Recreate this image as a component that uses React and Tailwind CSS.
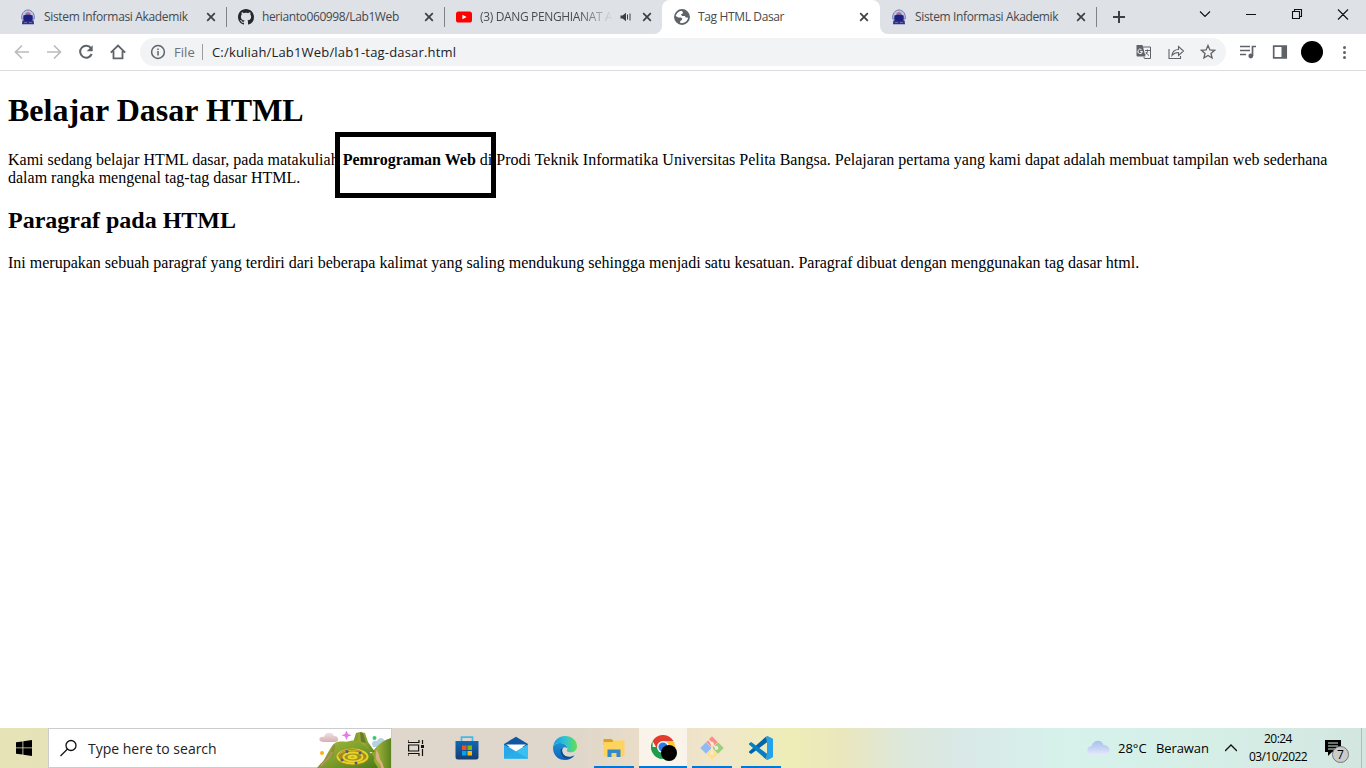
import React from "react";

function Crest() {
  return (
    <svg className="h-4 w-4 shrink-0" viewBox="0 0 16 16">
      <path d="M1.800 10C1 5 4 1 8 1s7 4 6.200 9z" fill="#c5c7e0" stroke="#7376b0" strokeWidth="1" />
      <path d="M4.500 6.500 6 3.200h4l1.500 3.300z" fill="#8b8fc4" />
      <path d="M3.300 6.500 8 5.200l4.700 1.300V10l-.7 2H4l-.7-2z" fill="#1d2080" />
      <circle cx="8" cy="4.600" r="1.200" fill="#ee5540" />
      <path d="M2.400 11.500c2-.4 4-.2 5.600.4 1.600-.6 3.600-.8 5.600-.4l.4 3.700H2z" fill="#2b2f88" />
      <path d="M3.800 13.600h3.200M9 13.600h3.200" stroke="#7d81b8" strokeWidth=".8" />
    </svg>
  );
}

function GithubMark() {
  return (
    <svg className="h-4 w-4 shrink-0" viewBox="0 0 16 16" fill="#24292f">
      <path d="M8 0C3.580 0 0 3.580 0 8c0 3.540 2.290 6.530 5.470 7.590.4.070.55-.17.55-.38 0-.19-.01-.82-.01-1.490-2.010.37-2.530-.49-2.690-.94-.09-.23-.48-.94-.82-1.130-.28-.15-.68-.52-.01-.53.63-.01 1.080.58 1.230.82.72 1.210 1.870.87 2.330.66.07-.52.28-.87.51-1.070-1.780-.2-3.640-.89-3.640-3.950 0-.87.31-1.590.82-2.150-.08-.2-.36-1.020.08-2.120 0 0 .67-.21 2.200.82.64-.18 1.320-.27 2-.27s1.360.09 2 .27c1.530-1.040 2.200-.82 2.200-.82.44 1.100.16 1.920.08 2.120.51.56.82 1.270.82 2.150 0 3.070-1.870 3.750-3.650 3.950.29.25.54.73.54 1.480 0 1.070-.01 1.930-.01 2.200 0 .21.15.46.55.38A8.010 8.010 0 0 0 16 8c0-4.420-3.580-8-8-8z" />
    </svg>
  );
}

function Youtube() {
  return (
    <svg className="h-4 w-4 shrink-0" viewBox="0 0 16 16">
      <rect y="2.500" width="16" height="11" rx="2.600" fill="#f00" />
      <path d="m6.400 5.700 4.200 2.300-4.200 2.300z" fill="#fff" />
    </svg>
  );
}

function Globe() {
  return (
    <svg className="h-4 w-4 shrink-0" viewBox="0 0 16 16">
      <circle cx="8" cy="8" r="7.200" fill="#5f6368" />
      <path d="M7.500 1.700c-2.900.2-5.300 2.400-5.800 5.300l2.600 1.400h2.500l1.500 1.200-.6 1.700-1.500.6v2.200c3.600.8 7.300-1.500 8-5.300l-2.400-.2-1-1.700H8.200L6.800 5.400l1.900-1 .2-1.500z" fill="#fff" />
      <circle cx="8" cy="8" r="7.200" fill="none" stroke="#5f6368" strokeWidth="1.500" />
    </svg>
  );
}

function TabClose() {
  return (
    <svg className="h-4 w-4 shrink-0" viewBox="0 0 16 16" stroke="#3c4043" strokeWidth="1.700">
      <path d="m4.200 4.200 7.600 7.600M11.800 4.200l-7.600 7.600" />
    </svg>
  );
}

function Tab({ icon, children, textClass, divider }) {
  return (
    <div className="flex h-full shrink-0 items-center pl-[11px]">
      {icon}
      <span className={"ml-2 whitespace-nowrap text-[12px] leading-4 text-[#45494d] " + textClass}>{children}</span>
      <TabClose />
      <span className={"ml-[7px] h-5 w-px shrink-0 " + (divider ? "bg-[#808387]" : "")} />
    </div>
  );
}

function TabStrip() {
  return (
    <header className="flex h-[34px] bg-[#dee1e6] font-['Open_Sans',sans-serif]">
      <div className="flex w-[662px] pl-[9px]">
        <Tab icon={<Crest />} textClass="w-[159px] tracking-[-0.34px]" divider>Sistem Informasi Akademik</Tab>
        <Tab icon={<GithubMark />} textClass="w-[159px] tracking-[-0.39px]" divider>herianto060998/Lab1Web</Tab>
        <div className="flex h-full items-center pl-[11px]">
          <Youtube />
          <span className="ml-2 w-[133px] whitespace-nowrap bg-linear-to-r from-[#45494d] from-75% to-[#45494d00] bg-clip-text text-[12px] leading-4 tracking-[-0.35px] text-transparent">(3) DANG PENGHIANAT A</span>
          <svg className="ml-[5px] h-4 w-4" viewBox="0 0 16 16" fill="#3c4043">
            <path d="M2.500 6.500h2L8 3.800v8.400L4.500 9.500h-2z" />
            <path d="M9.500 5.500v5M12 4.500v7" stroke="#3c4043" fill="none" />
          </svg>
          <span className="ml-[5px] flex"><TabClose /></span>
        </div>
      </div>
      <div className="w-[218px]">
        <div className="relative h-full rounded-t-lg bg-white pl-px">
          <Tab icon={<Globe />} textClass="w-[158px] tracking-[-0.36px]">Tag HTML Dasar</Tab>
          <svg className="absolute bottom-0 -left-2 h-2 w-2" viewBox="0 0 8 8" fill="#fff"><path d="M8 0v8H0a8 8 0 0 0 8-8" /></svg>
          <svg className="absolute -right-2 bottom-0 h-2 w-2" viewBox="0 0 8 8" fill="#fff"><path d="M0 0v8h8a8 8 0 0 1-8-8" /></svg>
        </div>
      </div>
      <Tab icon={<Crest />} textClass="w-[158px] tracking-[-0.36px]" divider>Sistem Informasi Akademik</Tab>
      <svg className="mt-[9px] ml-[13px] h-4 w-4" viewBox="0 0 16 16" stroke="#3c4043" strokeWidth="2"><path d="M9 2v12M3 8h12" /></svg>
      <svg className="ml-auto h-[34px] w-[170px]" viewBox="0 0 170 34" fill="none" stroke="#111" strokeWidth="1.100">
        <path d="m4 11.500 5 5 5-5M50 14.500h10M96.500 11.500h7v7h-7zM98.500 11V9.500h7v7H104M142 9.500l10 10M152 9.500l-10 10" />
      </svg>
    </header>
  );
}

function Toolbar() {
  return (
    <div className="flex h-[37px] items-center border-b border-[#dadce0] bg-white font-['Open_Sans',sans-serif] text-[13px]">
      <svg className="h-9 w-[140px] shrink-0" viewBox="0 0 140 36" fill="none" strokeWidth="1.700">
        <path d="M29 18H16.500M22 11.500 15.500 18l6.500 6.500M47 18h12.500M54 11.500l6.500 6.500-6.500 6.500" stroke="#babcbe" />
        <path d="M91 14.200A6 6 0 1 0 91.700 20" stroke="#5f6368" strokeWidth="2" />
        <path d="M92.700 11.200v6h-6z" fill="#5f6368" />
        <path d="M110.800 18.700 118 11.500l7.200 7.200M113.500 17v7.300h9V17" stroke="#5f6368" strokeWidth="1.800" />
      </svg>
      <div className="flex h-7 w-[1086px] shrink-0 items-center rounded-full bg-[#f1f3f4] pl-[10px]">
        <svg className="h-4 w-4" viewBox="0 0 16 16" fill="none" stroke="#5f6368" strokeWidth="1.500"><circle cx="8" cy="8" r="6.400" /><path d="M8 7v4.500M8 4.400V6" /></svg>
        <span className="ml-2 w-[21px] whitespace-nowrap pt-px tracking-[0.05px] text-[#6d7176]">File</span>
        <span className="ml-[7px] h-4 w-px bg-[#9b9ea2]" />
        <span className="ml-[9px] whitespace-nowrap pt-px tracking-[0.18px] text-[#202124]">C:/kuliah/Lab1Web/lab1-tag-dasar.html</span>
        <svg className="mr-[10px] ml-auto h-5 w-20" viewBox="0 0 80 20" fill="none" stroke="#5f6368" strokeWidth="1.300">
          <path d="M.5 3h6l3 11.500h-8a1 1 0 0 1-1-1z" fill="#5f6368" stroke="none" />
          <path d="M7 5h7.500v11.500H8.500L7.800 15M9 8.500h5M11.500 7.500v1c0 2-1 3-2 4M10 10c.5 1.500 2 3 3 3.500" strokeWidth="1" />
          <path d="M5.500 7.700A2.200 2.200 0 1 0 6.300 9.500H4.300" stroke="#fff" strokeWidth="1" />
          <path d="M33 7v9.500h11.500V14M36 13.500c.5-4 3-6 6.500-6V4.500L47.500 9l-5 4.500v-3c-2.500 0-4.500.5-6.500 3z" strokeWidth="1.100" />
          <path d="m72 3.500 1.900 4.400 4.700.4L75 11.400l1.100 4.600-4.100-2.500-4.100 2.500 1.100-4.600-3.600-3.100 4.700-.4z" />
        </svg>
      </div>
      <svg className="h-9 w-[140px] shrink-0" viewBox="0 0 140 36" fill="none" stroke="#5f6368" strokeWidth="1.700">
        <path d="M14 12.500h10M14 16.500h10M14 20.500h6M26.500 22v-9.500h3.500" />
        <circle cx="24.800" cy="22" r="2.400" fill="#5f6368" stroke="none" />
        <path d="M47.700 12.200h12.500v11.600H47.700z" /><path d="M55.500 12H61v12h-5.500z" fill="#5f6368" stroke="none" />
        <circle cx="86" cy="18" r="11" fill="#000" stroke="none" />
        <g fill="#5f6368" stroke="none"><circle cx="118.500" cy="13.500" r="1.500" /><circle cx="118.500" cy="18.500" r="1.500" /><circle cx="118.500" cy="23.500" r="1.500" /></g>
      </svg>
    </div>
  );
}

function Page() {
  return (
    <main className="h-[657px] bg-white px-2 pt-[21px] font-['Liberation_Serif',serif] text-[16px] leading-[18px] text-black">
      <h1 className="text-[32px] leading-[37px] font-bold">Belajar Dasar HTML</h1>
      <p className="mt-[22px]">
        Kami sedang belajar HTML dasar, pada matakuliah{" "}
        <span className="relative">
          <b>Pemrograman Web</b>
          <span className="absolute -top-[19px] -left-2 h-[66px] w-[161px] border-5 border-black" />
        </span>{" "}
        di Prodi Teknik Informatika Universitas Pelita Bangsa. Pelajaran pertama yang kami dapat adalah membuat tampilan web sederhana dalam rangka mengenal tag-tag dasar HTML.
      </p>
      <h2 className="mt-5 text-[24px] leading-[27px] font-bold">Paragraf pada HTML</h2>
      <p className="mt-5">Ini merupakan sebuah paragraf yang terdiri dari beberapa kalimat yang saling mendukung sehingga menjadi satu kesatuan. Paragraf dibuat dengan menggunakan tag dasar html.</p>
    </main>
  );
}

function SearchArt() {
  return (
    <svg className="h-[39px] w-[74px]" viewBox="0 0 74 39">
      <defs>
        <linearGradient id="hill" x2="1" y2="1"><stop stopColor="#a9b83a" /><stop offset=".5" stopColor="#7b9e2b" /><stop offset="1" stopColor="#4c7a18" /></linearGradient>
        <linearGradient id="hill2" x2="1"><stop stopColor="#5d8420" /><stop offset=".55" stopColor="#9cb038" /><stop offset="1" stopColor="#5b831f" /></linearGradient>
        <linearGradient id="pink" x2="0" y2="1"><stop stopColor="#f3dfe0" /><stop offset="1" stopColor="#d5b0b6" /></linearGradient>
      </defs>
      <path d="M3 12c-2-3 1-5 4-4 1-5 8-6 10-1 4-1 6 5 2 6H6z" fill="url(#pink)" />
      <path d="M55 15c0-3 3-4 5-3 2-5 7-3 8 0 4 1 3 6-1 6H56z" fill="#b7d2df" />
      <path d="M29.500 1.500 31 5l3.500 1.200L31 7.500 29.500 11 28 7.500l-3.500-1.300L28 5z" fill="#e27ae8" />
      <circle cx="5" cy="24" r="2" fill="#ffad18" /><circle cx="57.500" cy="9" r="2" fill="#3ac874" />
      <path d="M51 27c6-4 9-14 23-18v30H44z" fill="url(#hill2)" />
      <path d="m36 14 3-10 4-1 5 1 3 9 7 10H30z" fill="url(#hill2)" />
      <path d="m43 3 1 10 5 1-3-10z" fill="#6b7b2c" />
      <path d="M2 39C8 31 13 17 18 14c6-3 10 0 15-2 8-2 13 3 18 9 4 5 7 6 6 9-1 3 3 6 4 9z" fill="url(#hill)" />
      <path d="M0 39c5-7 10-9 13-15l4-9c3 3-2 8 0 11-4 3-9 5-11 13z" fill="#8e9039" />
      <path d="M4 37c3-5 9-7 11-14" fill="none" stroke="#c39268" strokeWidth="1.500" />
      <path d="M59 21c5 5 2 8 6 12l2 6h-3c0-5-6-7-5-12z" fill="#dcae80" />
      <ellipse cx="35.500" cy="28.500" rx="16" ry="8" fill="#a08d1c" />
      <g fill="none" stroke="#e8d42b" strokeWidth="2"><ellipse cx="35.500" cy="27.500" rx="15" ry="7" /><ellipse cx="36" cy="28" rx="9.500" ry="4.500" /><ellipse cx="35.500" cy="28" rx="4" ry="1.500" /></g>
      <path d="M21 27c2-6 15-9 24-4" fill="none" stroke="#bd7741" />
      <g fill="#4e5d75"><circle cx="30" cy="22.500" r="1.500" /><circle cx="43" cy="24" r="1.500" /><circle cx="25" cy="31" r="1.500" /><circle cx="39" cy="34" r="1.500" /></g>
    </svg>
  );
}

function Store() {
  return <svg className="h-6 w-6" viewBox="0 0 24 24"><defs><linearGradient id="store" x2="0" y2="1"><stop stopColor="#1267b5" /><stop offset="1" stopColor="#173d73" /></linearGradient></defs><path d="M6.500 6V1.200h11V6" fill="none" stroke="#43b9e6" strokeWidth="1.700" /><path d="M.5 5h23v16a2.500 2.500 0 0 1-2.500 2.500H3A2.500 2.500 0 0 1 .5 21z" fill="url(#store)" /><path fill="#f25022" d="M7 9.500h4.500V14H7z" /><path fill="#7fba00" d="M12.500 9.500H17V14h-4.500z" /><path fill="#00a4ef" d="M7 15h4.500v4.500H7z" /><path fill="#ffb900" d="M12.500 15H17v4.500h-4.500z" /></svg>;
}

function Mail() {
  return <svg className="h-6 w-6" viewBox="0 0 24 24"><path d="M0 8 12 .8 24 8v3H0z" fill="#1257a2" /><path d="M2 8.500h20l-10 7z" fill="#fff" /><path d="M0 8.500V22.500h24V8.500L12 15.500z" fill="#28a8e8" /><path d="m0 22.500 24-14v14z" fill="#36c1f2" /><path d="m12 15.500 12 7H0z" fill="#2aaee9" /></svg>;
}

function Edge() {
  return (
    <svg className="h-6 w-6" viewBox="0 0 24 24">
      <defs><linearGradient id="edgeA" x2="1"><stop stopColor="#169ae1" /><stop offset=".5" stopColor="#2ac4d4" /><stop offset="1" stopColor="#67df4c" /></linearGradient><linearGradient id="edgeB" x2="0" y2="1"><stop stopColor="#1b93d8" /><stop offset="1" stopColor="#1160b7" /></linearGradient></defs>
      <path d="M.2 10C1.500 3.800 6.200 0 12 0c7 0 12 4.700 12 10.300 0 4-3 6-6.500 6-3.300 0-4.200-1.300-3.300-2.500C16 11 12 7 7 7 3.800 7 1.400 8.300.2 10z" fill="url(#edgeA)" />
      <path d="M.2 10C2 7.600 5 6.700 7.500 7c4 .4 7 3 7 5.500-1-1-2-1.500-3.200-1.300-2 .4-2.800 3-1.800 5.500 2 5 8 5.300 12 2.500-2 3-5.400 4.800-9.500 4.800C4.500 24-1 18 .2 10z" fill="url(#edgeB)" />
      <path d="M8 13c-1.500 4 1.500 9 6 9.800 3-.2 5.700-1.400 7.500-3.600-5 2.800-10.500 1.500-12-2.500-.5-1.500-.5-3 0-4.200z" fill="#0d4b8d" />
    </svg>
  );
}

function Explorer() {
  return <svg className="h-6 w-6" viewBox="0 0 24 24"><path d="M1.500 3h8l2 2v4h-10z" fill="#dda119" /><path d="M1.500 6h9l2-1.500h10V20.500h-21z" fill="#ffd45d" /><path d="M5.500 21v-7.500h13V21h-4v-4h-5v4z" fill="#3188cd" /></svg>;
}

function Chrome() {
  return <svg className="mt-0.5 ml-1 h-7 w-7" viewBox="0 0 28 28"><path d="M12 12H1.600V6A12 12 0 0 0 12 24l5-9z" fill="#229b4b" /><path d="M12 6h10.400A12 12 0 0 1 12 24l5-9z" fill="#fcc934" /><path d="M1.600 6A12 12 0 0 1 22.400 6H12l-5.200 9z" fill="#e33b2e" /><circle cx="12" cy="12" r="6" fill="#fff" /><circle cx="12" cy="12" r="4.600" fill="#297be8" /><circle cx="18" cy="18" r="8" fill="#000" /></svg>;
}

function Git() {
  return (
    <svg className="h-6 w-6" viewBox="0 0 24 24">
      <path d="m12 .3 5.700 5.700-5.700 5.700L6.300 6z" fill="#ff8c8c" />
      <path d="m6 6.300 5.700 5.700L6 17.700.3 12z" fill="#8fbaf3" />
      <path d="m18 6.300 5.700 5.700-5.700 5.700-5.700-5.700z" fill="#99cf7d" />
      <path d="m12 12.300 5.700 5.700-5.700 5.700L6.300 18z" fill="#ffe08a" />
      <path d="m8 3.500 8.500 8.500M12 8v9" stroke="#f5ead0" strokeWidth="1.500" fill="none" />
      <g fill="#f5ead0"><circle cx="12" cy="7.500" r="1.700" /><circle cx="16.500" cy="12" r="1.900" /><circle cx="12" cy="17" r="1.900" /></g>
    </svg>
  );
}

function Code() {
  return <svg className="h-6 w-6" viewBox="0 0 24 24"><path d="M.3 16.800 2.200 18 18 6.200 17.500.2.300 15.200a1 1 0 0 0 0 1.600" fill="#0065a9" /><path d="M.3 7.200 2.200 6 18 17.800l-.5 6L.3 8.800a1 1 0 0 1 0-1.600" fill="#087cc4" /><path d="M17.500.2c.5-.3 1-.2 1.500 0l4 2c.7.300 1 .7 1 1.300v17c0 .6-.3 1-1 1.300l-4 2c-.8.300-1.500.2-2-.3.500.3 1 0 1-.7V1.200c0-.7-.3-1-.5-1" fill="#26a2ea" /></svg>;
}

function AppButton({ children, active, running }) {
  return (
    <div className={"flex h-10 flex-col items-center " + (active ? "ml-px w-12 bg-[#f9f3e9]" : "w-[49px]")}>
      <div className="flex h-[38px] items-center pt-0.5">{children}</div>
      {running && <span className={"h-0.5 bg-[#0078d7] " + (active ? "w-12" : "w-10")} />}
    </div>
  );
}

function Taskbar() {
  return (
    <footer className="flex h-10 items-center bg-[linear-gradient(90deg,#e6e4b6_0px,#e6e2b9_48px,#dfd6cc_392px,#e0d7cb_580px,#ecdfc7_660px,#f0e7ca_720px,#eeedb6_790px,#ebe7bd_840px,#dde8dc_905px,#d9e9e8_970px,#d6f2eb_1070px,#d5efe7_1200px,#d3e6e0_1366px)] font-['Open_Sans',sans-serif] text-black">
      <div className="flex w-12 shrink-0 justify-center">
        <svg className="h-4 w-4" viewBox="0 0 16 16"><path d="M0 2.300 6.500 1.400v6.100H0zM7.300 1.300 16 0v7.500H7.300zM0 8.300h6.500v6.300L0 13.700zM7.300 8.300H16V16l-8.700-1.200z" /></svg>
      </div>
      <div className="flex h-10 w-[344px] shrink-0 items-center border border-[#ccc] bg-white">
        <svg className="ml-[11px] h-[18px] w-[18px]" viewBox="0 0 18 18" fill="none" stroke="#111" strokeWidth="1.300"><circle cx="11" cy="6.500" r="5" /><path d="m7.500 10-7 7" /></svg>
        <span className="ml-[10px] w-[180px] whitespace-nowrap text-[14px] tracking-[-0.01px] text-[#222]">Type here to search</span>
        <div className="ml-auto"><SearchArt /></div>
      </div>
      <div className="flex w-[50px] pl-4">
        <svg className="h-4 w-4" viewBox="0 0 16 16" fill="none" stroke="#111" strokeWidth="1.200"><path d="M0 0v2.500h11V0M0 16v-2.500h11V16M.6 5h10v6H.6zM14.500 0v4M14.500 9v7" /><path d="M13 5h3v3h-3z" fill="#111" stroke="none" /></svg>
      </div>
      <div className="flex">
        <AppButton><Store /></AppButton>
        <AppButton><Mail /></AppButton>
        <AppButton><Edge /></AppButton>
        <AppButton running><Explorer /></AppButton>
        <AppButton active running><Chrome /></AppButton>
        <AppButton running><Git /></AppButton>
        <AppButton running><Code /></AppButton>
      </div>
      <div className="ml-auto flex h-10 items-center">
        <svg className="h-4 w-[23px]" viewBox="0 0 23 16"><defs><linearGradient id="cloud" x2="0" y2="1"><stop stopColor="#a9c1f0" /><stop offset=".5" stopColor="#c3d2f3" /><stop offset="1" stopColor="#e6ebfa" /></linearGradient></defs><path d="M5 15a4.500 4.500 0 0 1-.5-9C7-1 15-.5 16.500 5c8 0 8 10 1 10z" fill="url(#cloud)" /></svg>
        <span className="ml-2 w-[38px] whitespace-nowrap pt-px text-[13px]">28°C</span>
        <span className="w-[69px] whitespace-nowrap pt-px text-[13px] tracking-[-0.1px]">Berawan</span>
        <svg className="h-3 w-3" viewBox="0 0 12 12" fill="none" stroke="#111" strokeWidth="1.400"><path d="m0 9 6-6 6 6" /></svg>
        <div className="ml-[10px] w-[62px] text-center text-[12px] leading-[18px] tracking-[-0.55px] whitespace-nowrap"><div>20:24</div><div>03/10/2022</div></div>
        <div className="relative ml-4 h-6 w-6">
          <svg className="h-6 w-6" viewBox="0 0 24 24"><path d="M0 4h16v12H7l-4 4v-4H0z" /><path d="M3 7h10M3 10h10M3 13h7" stroke="#d6ece2" /></svg>
          <span className="absolute top-[10px] left-[7px] flex h-[17px] w-[17px] items-center justify-center rounded-full border border-[#777] bg-[#cbcbcb] text-[12px] leading-none text-black">7</span>
        </div>
        <span className="mr-1 ml-[12px] h-10 w-px bg-[#aebfb6]" />
      </div>
    </footer>
  );
}

export default function App() {
  return (
    <div className="flex h-[768px] w-[1366px] flex-col overflow-hidden bg-white">
      <TabStrip />
      <Toolbar />
      <Page />
      <Taskbar />
    </div>
  );
}
